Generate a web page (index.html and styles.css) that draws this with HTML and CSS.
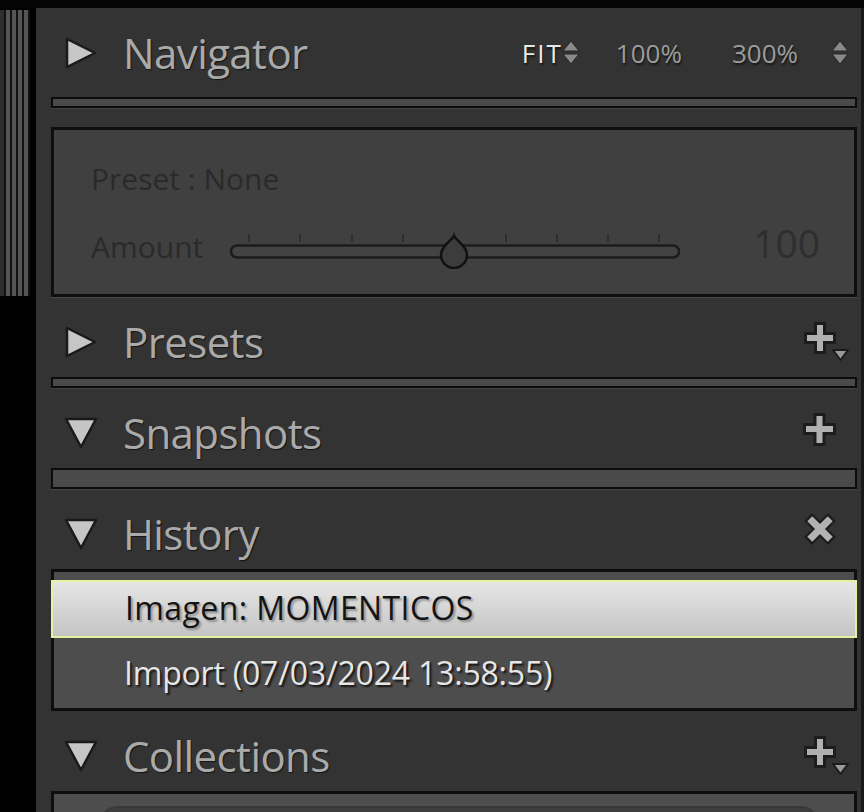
FILE: index.html
```html
<!DOCTYPE html>
<html lang="es">
<head>
<meta charset="utf-8">
<title>Develop panels</title>
<link rel="stylesheet" href="styles.css">
</head>
<body>
<div class="app">
  <div class="topband"></div>
  <div class="main">
    <div class="gutter"><div class="grip"></div></div>
    <div class="panel">

      <div class="phead nav">
        <svg class="disc" viewBox="0 0 36 36" width="36" height="36"><polygon points="4,4 32,18 4,32" /></svg>
        <span class="ptitle">Navigator</span>
        <div class="navctl">
          <span class="zoom active">FIT</span>
          <svg class="updown" viewBox="0 0 18 26" width="18" height="26"><polygon points="1,12 9,2 17,12"/><polygon points="1,15 17,15 9,25"/></svg>
          <span class="zoom z100">100%</span>
          <span class="zoom z300">300%</span>
          <svg class="updown last" viewBox="0 0 18 26" width="18" height="26"><polygon points="1,12 9,2 17,12"/><polygon points="1,15 17,15 9,25"/></svg>
        </div>
      </div>
      <div class="bar"></div>

      <div class="preset-box">
        <div class="prow one">Preset : None</div>
        <div class="prow two">
          <span class="plabel">Amount</span>
          <svg class="slider" viewBox="0 0 452 44" width="452" height="44">
            <g class="ticks">
              <line x1="20" y1="9" x2="20" y2="17"/><line x1="71" y1="9" x2="71" y2="17"/>
              <line x1="123" y1="9" x2="123" y2="17"/><line x1="174" y1="9" x2="174" y2="17"/>
              <line x1="225" y1="7" x2="225" y2="17"/>
              <line x1="277" y1="9" x2="277" y2="17"/><line x1="328" y1="9" x2="328" y2="17"/>
              <line x1="379" y1="9" x2="379" y2="17"/><line x1="430" y1="9" x2="430" y2="17"/>
            </g>
            <rect class="track" x="2" y="20.5" width="448" height="12" rx="6"/>
            <path class="thumb" d="M225 11 C228 16 238 21 238 30 A13 13 0 0 1 212 30 C212 21 222 16 225 11 Z"/>
          </svg>
          <span class="pval">100</span>
        </div>
      </div>

      <div class="phead">
        <svg class="disc" viewBox="0 0 36 36" width="36" height="36"><polygon points="4,4 32,18 4,32" /></svg>
        <span class="ptitle">Presets</span>
        <svg class="act" viewBox="0 0 48 42" width="48" height="42">
          <polygon class="ic" points="12.5,2.5 21.5,2.5 21.5,12.5 31.5,12.5 31.5,21.5 21.5,21.5 21.5,31.5 12.5,31.5 12.5,21.5 2.5,21.5 2.5,12.5 12.5,12.5"/>
          <polygon class="dd" points="30,29 45,29 37.5,39"/>
        </svg>
      </div>
      <div class="bar"></div>

      <div class="phead">
        <svg class="disc" viewBox="0 0 36 36" width="36" height="36"><polygon points="3,4 33,4 18,32" /></svg>
        <span class="ptitle">Snapshots</span>
        <svg class="act" viewBox="0 0 48 42" width="48" height="42">
          <polygon class="ic" points="12,2.5 21,2.5 21,12.5 31.5,12.5 31.5,21.5 21,21.5 21,32.5 12,32.5 12,21.5 1.5,21.5 1.5,12.5 12,12.5"/>
        </svg>
      </div>
      <div class="bar tall"></div>

      <div class="phead">
        <svg class="disc" viewBox="0 0 36 36" width="36" height="36"><polygon points="3,4 33,4 18,32" /></svg>
        <span class="ptitle">History</span>
        <svg class="act" viewBox="0 0 48 42" width="48" height="42">
          <g class="xo"><line x1="5" y1="4" x2="29" y2="28"/><line x1="29" y1="4" x2="5" y2="28"/></g>
          <g class="xi"><line x1="6.8" y1="5.8" x2="27.2" y2="26.2"/><line x1="27.2" y1="5.8" x2="6.8" y2="26.2"/></g>
        </svg>
      </div>
      <div class="history-box">
        <div class="hrow selected">Imagen: MOMENTICOS</div>
        <div class="hrow">Import (07/03/2024 13:58:55)</div>
      </div>

      <div class="phead">
        <svg class="disc" viewBox="0 0 36 36" width="36" height="36"><polygon points="3,4 33,4 18,32" /></svg>
        <span class="ptitle">Collections</span>
        <svg class="act" viewBox="0 0 48 42" width="48" height="42">
          <polygon class="ic" points="12.5,2.5 21.5,2.5 21.5,12.5 31.5,12.5 31.5,21.5 21.5,21.5 21.5,31.5 12.5,31.5 12.5,21.5 2.5,21.5 2.5,12.5 12.5,12.5"/>
          <polygon class="dd" points="30,29 45,29 37.5,39"/>
        </svg>
      </div>
      <div class="coll-box">
        <div class="search"></div>
      </div>

    </div>
    <div class="rightedge"></div>
  </div>
</div>
</body>
</html>
```

FILE: styles.css
```css
html, body {
  margin: 0;
  padding: 0;
  background: #000;
  width: 864px;
  height: 812px;
  overflow: hidden;
  font-family: "Open Sans", "Noto Sans", "DejaVu Sans", sans-serif;
}

.app {
  width: 864px;
  height: 812px;
  display: flex;
  flex-direction: column;
}

.topband {
  height: 8px;
  background: #050505;
  flex: none;
}

.main {
  flex: 1;
  display: flex;
  min-height: 0;
}

.gutter {
  width: 36px;
  flex: none;
  background: #000;
}

.grip {
  margin-top: 2px;
  height: 286px;
  width: 26px;
  border-left: 4px solid #2e2e2e;
  background: repeating-linear-gradient(to right, #111 0 2px, #555 2px 6px);
}

.panel {
  flex: 1;
  background: #333333;
  display: flex;
  flex-direction: column;
  overflow: hidden;
}

.rightedge {
  width: 3px;
  flex: none;
  background: #181818;
}

/* panel headers */
.phead {
  height: 80px;
  box-sizing: border-box;
  padding: 10px 10px 0 27px;
  display: flex;
  align-items: center;
  flex: none;
}

.phead.nav {
  height: 89px;
  padding-top: 1px;
  padding-right: 12px;
}

.disc {
  flex: none;
  display: block;
}

.disc polygon {
  fill: #c6c6c6;
  stroke: #1a1a1a;
  stroke-width: 2.5;
  stroke-linejoin: round;
}

.ptitle {
  margin-left: 24px;
  font-size: 42px;
  line-height: 1;
  letter-spacing: -0.6px;
  color: #aaaaaa;
  text-shadow: 1px 1px 1px #151515;
}

.act {
  margin-left: auto;
  display: block;
  flex: none;
}

.ic {
  fill: #b0b0b0;
  stroke: #1c1c1c;
  stroke-width: 3;
}

.dd {
  fill: #9a9a9a;
  stroke: #1c1c1c;
  stroke-width: 2;
  stroke-linejoin: round;
}

.xo line {
  stroke: #1c1c1c;
  stroke-width: 11;
}

.xi line {
  stroke: #b2b2b2;
  stroke-width: 7;
}

/* navigator controls */
.navctl {
  margin-left: auto;
  display: flex;
  align-items: center;
}

.zoom {
  font-size: 26px;
  line-height: 1;
  color: #9c9c9c;
  text-shadow: 1px 2px 2px #151515;
}

.zoom.active {
  color: #e8e8e8;
  letter-spacing: 2px;
}

.updown {
  display: block;
  margin-left: -1px;
  margin-top: -2px;
}

.updown polygon {
  fill: #8a8a8a;
  stroke: #262626;
  stroke-width: 1;
}

.z100 {
  margin-left: 36px;
}

.z300 {
  margin-left: 50px;
}

.updown.last {
  margin-left: 33px;
}

/* separator bars */
.bar {
  flex: none;
  height: 11px;
  box-sizing: border-box;
  margin: 0 4px 0 15px;
  border: 2px solid #0c0c0c;
  background: #4a4a4a;
  box-shadow: 0 1px 0 #444;
}

.bar.tall {
  height: 21px;
}

/* preset box */
.preset-box {
  flex: none;
  margin: 19px 4px 0 15px;
  height: 170px;
  box-sizing: border-box;
  border: 3px solid #0e0e0e;
  background: #404040;
  padding: 29px 34px 25px 37px;
  display: flex;
  flex-direction: column;
  box-shadow: 0 1px 0 #4a4a4a;
}

.prow {
  display: flex;
  align-items: center;
  color: #2a2a2a;
  font-size: 30px;
  line-height: 1;
}

.prow.one {
  height: 40px;
}

.prow.two {
  height: 44px;
  margin-top: 26px;
}

.plabel {
  width: 138px;
  flex: none;
}

.slider {
  display: block;
  flex: none;
}

.ticks line {
  stroke: #2a2a2a;
  stroke-width: 1.6;
}

.track {
  fill: #434343;
  stroke: #1c1c1c;
  stroke-width: 2.5;
}

.thumb {
  fill: #3c3c3c;
  stroke: #111;
  stroke-width: 2.5;
}

.pval {
  margin-left: auto;
  margin-top: -10px;
  font-size: 39px;
  color: #2e2e2e;
}

/* history */
.history-box {
  flex: none;
  margin: 0 4px 0 15px;
  border: 3px solid #0e0e0e;
  background: #4d4d4d;
  padding-top: 8px;
  display: flex;
  flex-direction: column;
}

.hrow {
  height: 70px;
  box-sizing: border-box;
  padding-left: 70px;
  display: flex;
  align-items: center;
  font-size: 32px;
  line-height: 1;
  letter-spacing: -0.2px;
  color: #e6e6e6;
  text-shadow: 2px 2px 2px #151515;
}

.hrow.selected {
  height: 58px;
  margin: 0 -3px;
  padding-left: 72px;
  padding-bottom: 2px;
  letter-spacing: 0.4px;
  border: 2px solid #e4f2a6;
  background: linear-gradient(#e6e6e6, #c4c4c4);
  color: #141414;
  text-shadow: 2px 2px 2px rgba(0, 0, 0, 0.3);
}

/* collections */
.coll-box {
  flex: 1;
  margin: 0 4px 0 15px;
  border: 3px solid #0e0e0e;
  border-bottom: none;
  background: #4d4d4d;
  padding: 12px 34px 0 44px;
}

.search {
  height: 40px;
  border-radius: 20px;
  background: #3e3e3e;
  border: 2px solid #383838;
}
```
